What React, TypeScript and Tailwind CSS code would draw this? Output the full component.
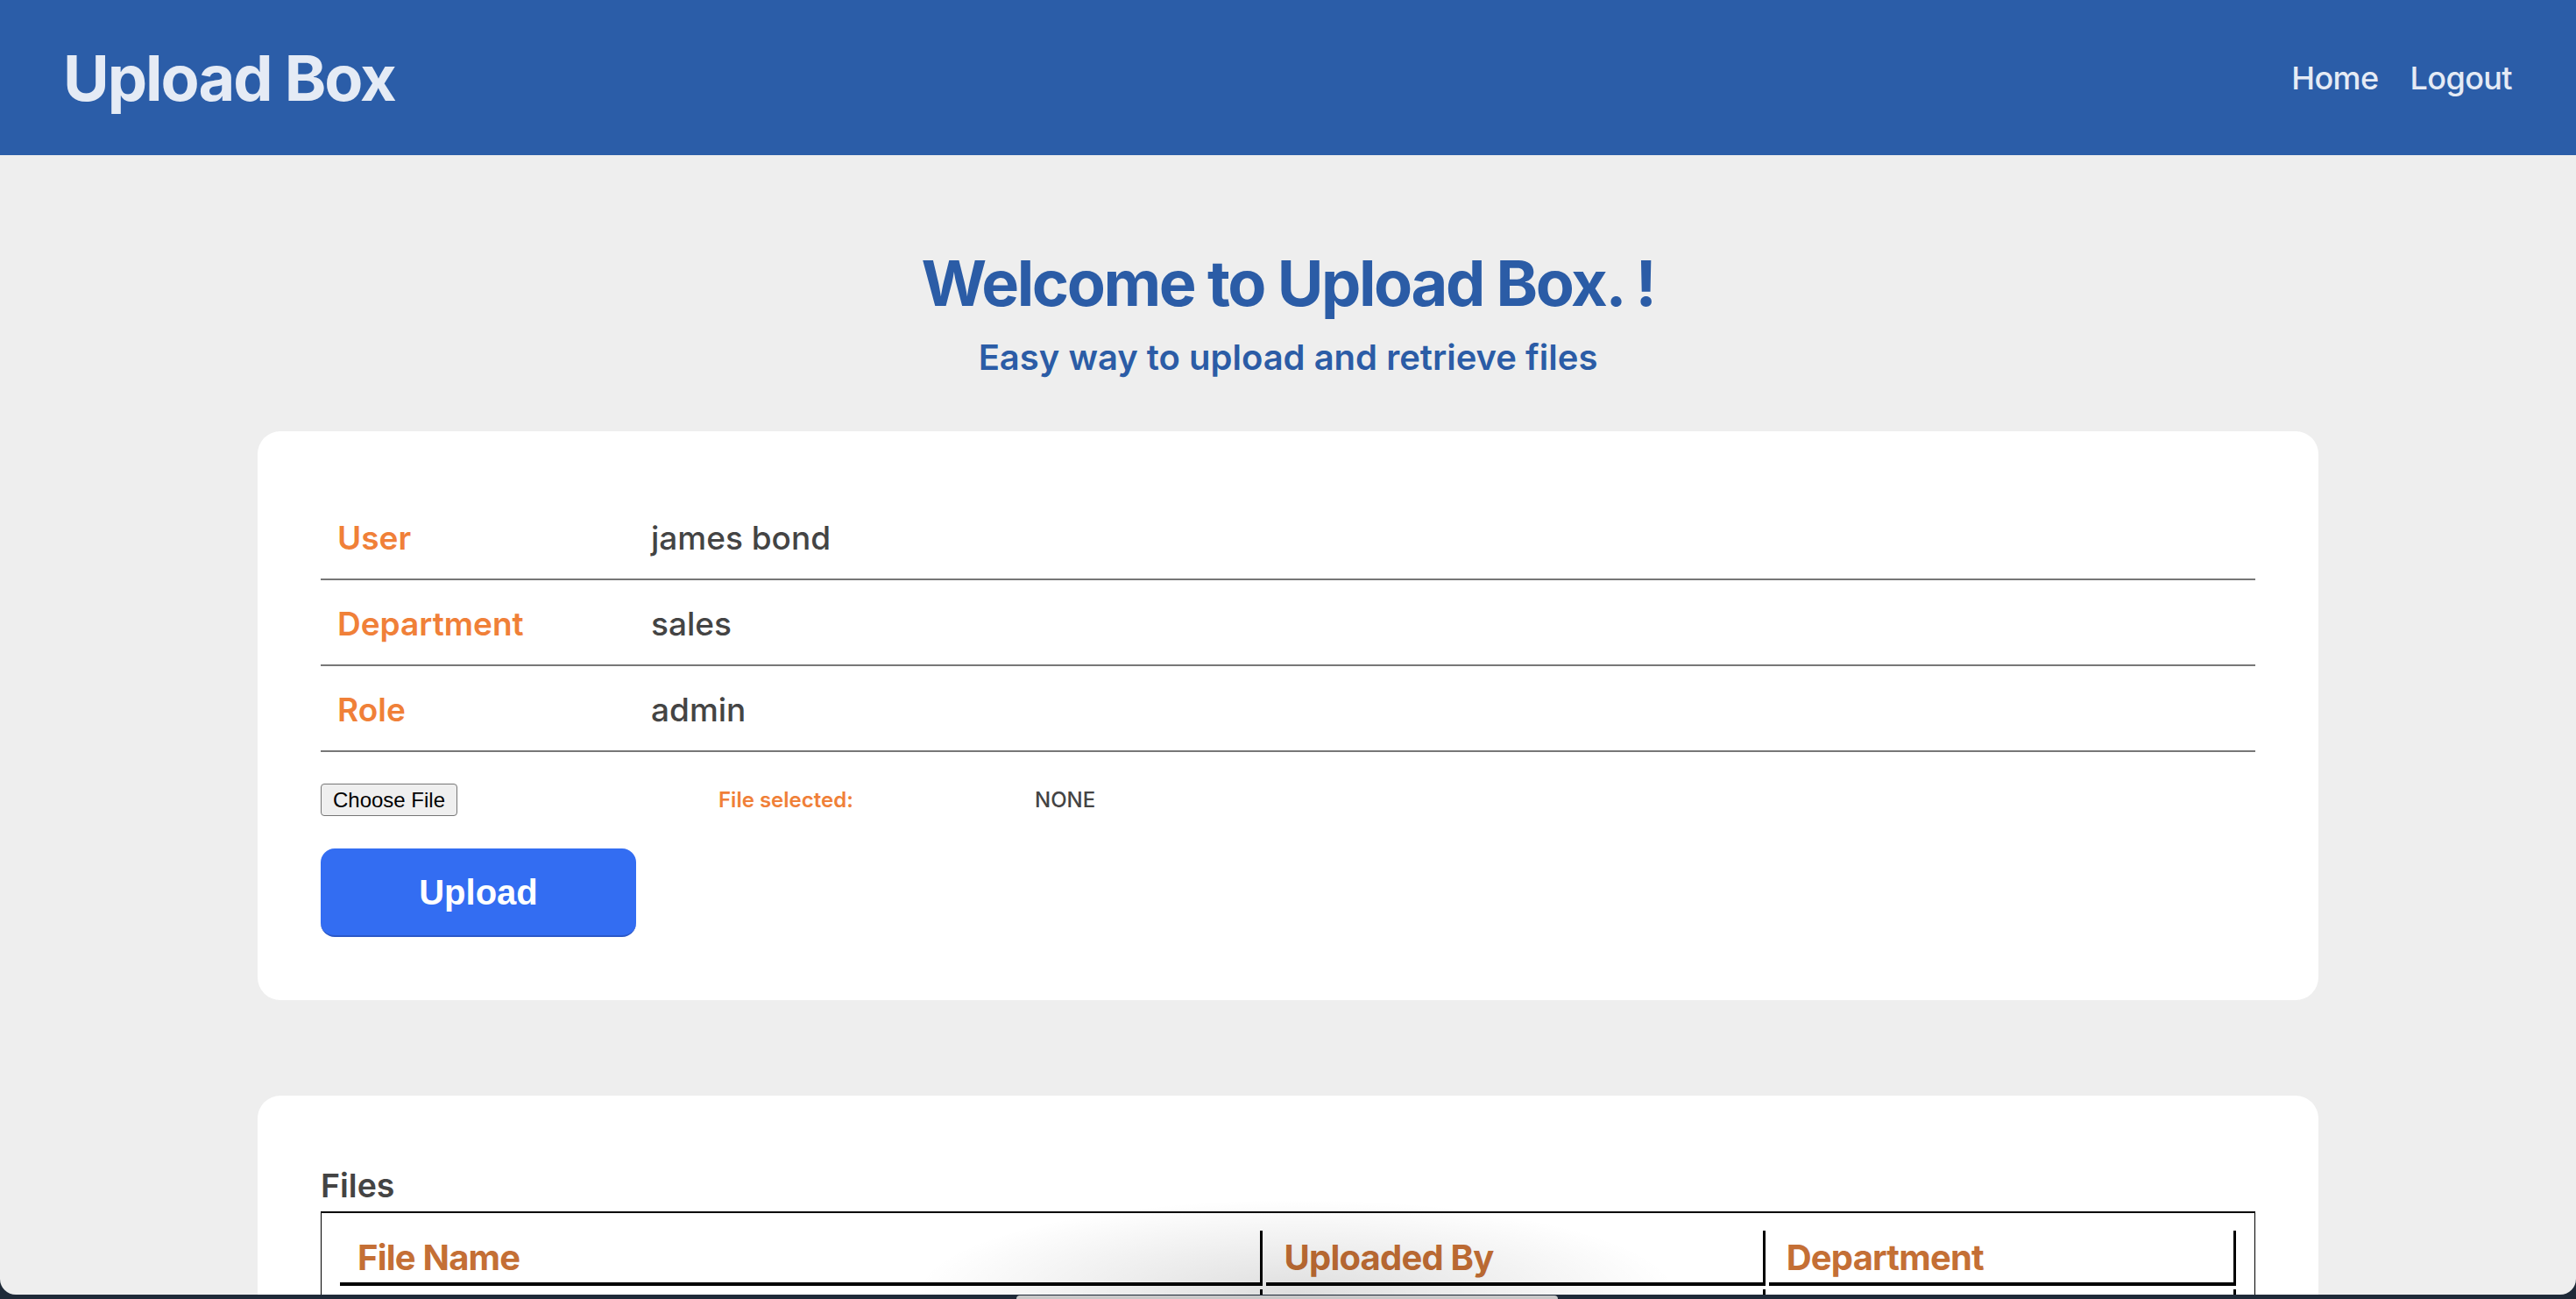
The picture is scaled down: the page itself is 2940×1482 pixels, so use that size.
const profile = [
  { label: 'User', value: 'james bond' },
  { label: 'Department', value: 'sales' },
  { label: 'Role', value: 'admin' },
];

const columns = ['File Name', 'Uploaded By', 'Department'];

const App = () => {
  return (
    <div className="relative h-[1482px] w-full overflow-hidden bg-[#1f2a38] font-['Inter','Liberation_Sans',sans-serif]">
      <div className="relative h-[1477px] overflow-hidden rounded-b-[18px] bg-[#eeeeee]">
        {/* Top bar */}
        <header className="flex h-[177px] items-center justify-between bg-[#2b5da8] pl-[72px] pr-[73px]">
          <h1 className="text-[72px] font-bold leading-none tracking-[-2px] text-[#e5ebf5]">Upload Box</h1>
          <nav className="flex items-center gap-[36px] text-[36px] font-medium tracking-[-0.6px] text-[#e5ebf5]">
            <a href="#">Home</a>
            <a href="#">Logout</a>
          </nav>
        </header>

        <main className="flex flex-col items-center">
          <h2 className="mt-[102px] text-[72px] font-bold leading-[88px] tracking-[-2.4px] text-[#2b5ca6]">
            Welcome to Upload Box. !
          </h2>
          <p className="mt-[17px] text-[40px] font-semibold leading-[48px] text-[#2b5ca6]">
            Easy way to upload and retrieve files
          </p>

          {/* Profile + upload card */}
          <section className="mt-[60px] w-[2352px] rounded-[26px] bg-white p-[72px]">
            {profile.map((row) => (
              <div
                key={row.label}
                className="grid h-[98px] grid-cols-[377px_1fr] items-center border-b-2 border-[#777777] pt-[4px] text-[37px]"
              >
                <span className="pl-[19px] font-semibold text-[#f08038]">{row.label}</span>
                <span className="font-medium text-[#444444]">{row.value}</span>
              </div>
            ))}

            <div className="mt-[36px] flex items-center">
              <button className="h-[37px] w-[156px] rounded-[4px] border border-[#767676] bg-[#efefef] font-['Liberation_Sans',Arial,sans-serif] text-[24px] leading-none text-black">
                Choose File
              </button>
              <span className="ml-[298px] w-[361px] text-[24px] font-semibold text-[#f08038]">File selected:</span>
              <span className="text-[24px] font-medium text-[#444444]">NONE</span>
            </div>

            <button className="mt-[37px] h-[101px] w-[360px] rounded-[16px] border-b-2 border-[#2a58c8] bg-[#336df2] font-['Liberation_Sans',Arial,sans-serif] text-[40px] font-bold text-white">
              Upload
            </button>
          </section>

          {/* Files card */}
          <section className="mt-[109px] w-[2352px] rounded-[26px] bg-white px-[72px] pb-[72px] pt-[80px]">
            <h3 className="text-[37.5px] font-semibold leading-[45px] text-[#444444]">Files</h3>
            <div className="mt-[7px] border border-t-2 border-black px-[21px] pt-[20px]">
              <div className="grid grid-cols-[1053fr_569fr_533fr] gap-[4px]">
                {columns.map((col) => (
                  <div
                    key={col}
                    className="flex h-[63px] items-center border-b-4 border-r-[3px] border-black pl-[20px] pt-[2px] text-[40px] font-bold tracking-[-0.8px] text-[#c46f35]"
                  >
                    {col}
                  </div>
                ))}
                {columns.map((col) => (
                  <div key={col + '-row'} className="h-[60px] border-r-[3px] border-black" />
                ))}
              </div>
            </div>
          </section>
        </main>

        {/* dock shadow from the desktop */}
        <div className="pointer-events-none absolute bottom-0 left-[1040px] h-[110px] w-[880px] bg-[radial-gradient(ellipse_at_bottom,rgba(0,0,0,0.13),transparent_70%)]" />
      </div>
      <div className="absolute bottom-0 left-[1160px] h-[4px] w-[618px] rounded-t-[6px] bg-[#c8c8c8]" />
    </div>
  );
};

export default App;
